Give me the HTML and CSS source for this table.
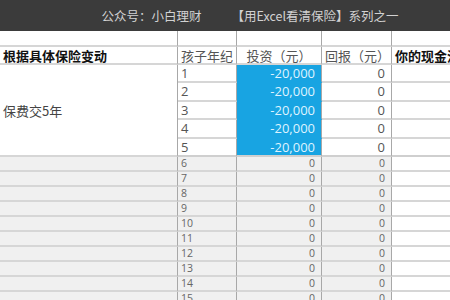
FILE: index.html
```html
<!DOCTYPE html>
<html lang="zh-CN">
<head>
<meta charset="utf-8">
<link rel="stylesheet" href="styles.css">
</head>
<body>
<div class="title"><span>公众号：小白理财</span><span>【用Excel看清保险】系列之一</span></div>
<div class="sheet">
  <div class="c blank"></div><div class="c blank"></div><div class="c blank"></div><div class="c blank"></div><div class="c blank last"></div>

  <div class="c hd bold">根据具体保险变动</div>
  <div class="c hd">孩子年纪</div>
  <div class="c hd center">投资（元）</div>
  <div class="c hd">回报（元）</div>
  <div class="c hd bold last">你的现金流</div>

  <div class="c merged">保费交5年</div>
  <div class="c big">1</div><div class="c big blue">-20,000</div><div class="c big num">0</div><div class="c big last"></div>
  <div class="c big">2</div><div class="c big blue">-20,000</div><div class="c big num">0</div><div class="c big last"></div>
  <div class="c big">3</div><div class="c big blue">-20,000</div><div class="c big num">0</div><div class="c big last"></div>
  <div class="c big">4</div><div class="c big blue">-20,000</div><div class="c big num">0</div><div class="c big last"></div>
  <div class="c big r5">5</div><div class="c big blue r5">-20,000</div><div class="c big num r5">0</div><div class="c big last r5"></div>

  <div class="c sm g"></div><div class="c sm g">6</div><div class="c sm g num">0</div><div class="c sm g num">0</div><div class="c sm last"></div>
  <div class="c sm g"></div><div class="c sm g">7</div><div class="c sm g num">0</div><div class="c sm g num">0</div><div class="c sm last"></div>
  <div class="c sm g"></div><div class="c sm g">8</div><div class="c sm g num">0</div><div class="c sm g num">0</div><div class="c sm last"></div>
  <div class="c sm g"></div><div class="c sm g">9</div><div class="c sm g num">0</div><div class="c sm g num">0</div><div class="c sm last"></div>
  <div class="c sm g"></div><div class="c sm g">10</div><div class="c sm g num">0</div><div class="c sm g num">0</div><div class="c sm last"></div>
  <div class="c sm g"></div><div class="c sm g">11</div><div class="c sm g num">0</div><div class="c sm g num">0</div><div class="c sm last"></div>
  <div class="c sm g"></div><div class="c sm g">12</div><div class="c sm g num">0</div><div class="c sm g num">0</div><div class="c sm last"></div>
  <div class="c sm g"></div><div class="c sm g">13</div><div class="c sm g num">0</div><div class="c sm g num">0</div><div class="c sm last"></div>
  <div class="c sm g"></div><div class="c sm g">14</div><div class="c sm g num">0</div><div class="c sm g num">0</div><div class="c sm last"></div>
  <div class="c sm g"></div><div class="c sm g">15</div><div class="c sm g num">0</div><div class="c sm g num">0</div><div class="c sm last"></div>
</div>
</body>
</html>
```
FILE: styles.css
```css
html, body {
  margin: 0;
  padding: 0;
  background: #ffffff;
  width: 450px;
  height: 300px;
  overflow: hidden;
  font-family: "Noto Sans CJK SC", "Noto Sans", sans-serif;
}
.title {
  height: 31px;
  background: #3b3b3b;
  color: #d2d2d2;
  font-size: 12.5px;
  display: flex;
  align-items: center;
  justify-content: center;
  gap: 30px;
  padding-left: 50px;
  box-sizing: border-box;
  white-space: nowrap;
}
.sheet {
  display: grid;
  grid-template-columns: 178px 59px 85px 70px 80px;
  grid-template-rows: 16px 18px 18px 19px 18px 19px 18px repeat(10, 15px);
  width: 472px;
}
.c {
  box-sizing: border-box;
  border-right: 1px solid #a8a8a8;
  border-bottom: 2px solid #d6d6d6;
  white-space: nowrap;
  display: flex;
  align-items: center;
  color: #555;
  padding: 0 3px;
  font-size: 13px;
  line-height: 1;
}
.c.last { border-right: none; overflow: hidden; }
.blank { background: #fff; }
.hd { font-size: 13px; color: #555; }
.hd.bold { font-weight: bold; color: #111; }
.hd.center { justify-content: center; }
.merged {
  grid-row: span 5;
  color: #444;
  font-size: 13px;
}
.big { font-family: "Open Sans", "Noto Sans", sans-serif; font-size: 13px; color: #555; }
.blue {
  background: #18a4e2;
  color: #dff3ff;
  justify-content: flex-end;
  border-bottom-color: #18a4e2;
  padding-right: 6px;
}
.num { justify-content: flex-end; padding-right: 6px; }
.r5 { border-bottom: 2px solid #cfcfcf; }
.blue.r5 { border-bottom-color: #cfcfcf; }
.sm {
  font-family: "Open Sans", "Noto Sans", sans-serif;
  font-size: 10.5px;
  color: #666;
}
.g { background: #f0f0f0; }
```
